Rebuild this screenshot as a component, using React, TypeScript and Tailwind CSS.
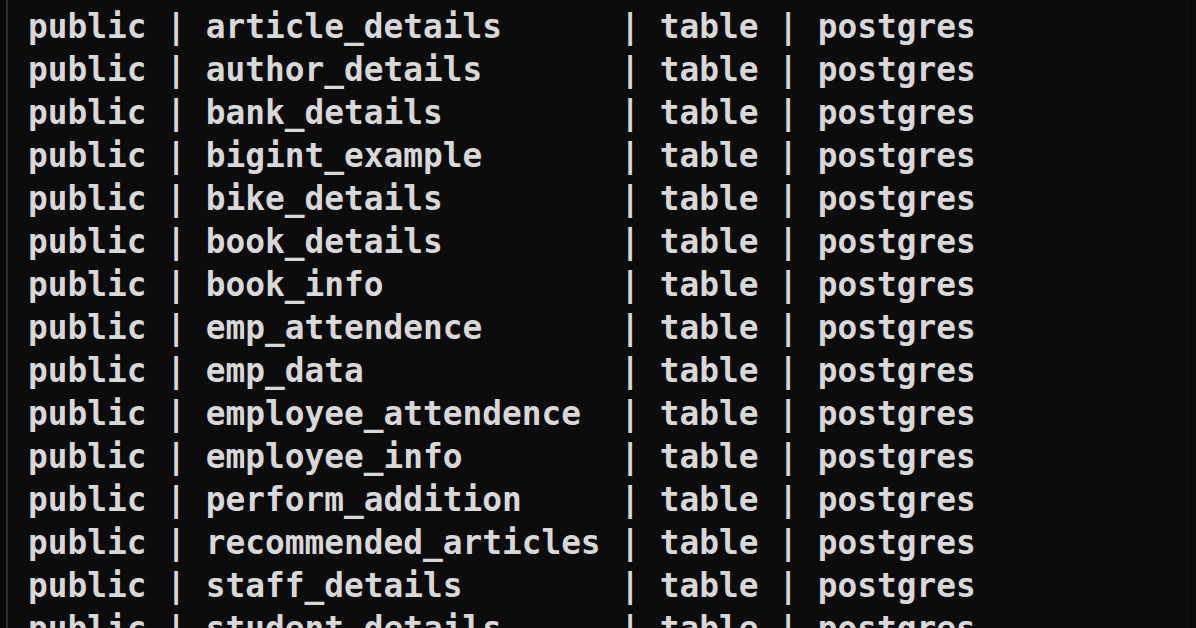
const rows = [
    "article_details",
    "author_details",
    "bank_details",
    "bigint_example",
    "bike_details",
    "book_details",
    "book_info",
    "emp_attendence",
    "emp_data",
    "employee_attendence",
    "employee_info",
    "perform_addition",
    "recommended_articles",
    "staff_details",
    "student_details",
];

const App = () => {
    return (
        <div className="h-screen w-full overflow-hidden flex flex-row bg-[#0c0c0c]">
            <div className="w-[6px] h-full bg-[#080808]"/>
            <div className="w-[2px] h-full bg-[#2e2e2e]"/>
            <div
                className="flex-1 pl-[20px] pt-[6px] text-[#d8d8d8] font-bold text-[32.8px] leading-[43px]"
                style={{fontFamily: '"DejaVu Sans Mono", "Liberation Mono", monospace'}}
            >
                {rows.map((name) => (
                    <div key={name} className="whitespace-pre">
                        {`public | ${name.padEnd(20, " ")} | table | postgres`}
                    </div>
                ))}
            </div>
            <div className="w-[6px] h-full bg-[#080808]"/>
        </div>
    );
};

export default App;
